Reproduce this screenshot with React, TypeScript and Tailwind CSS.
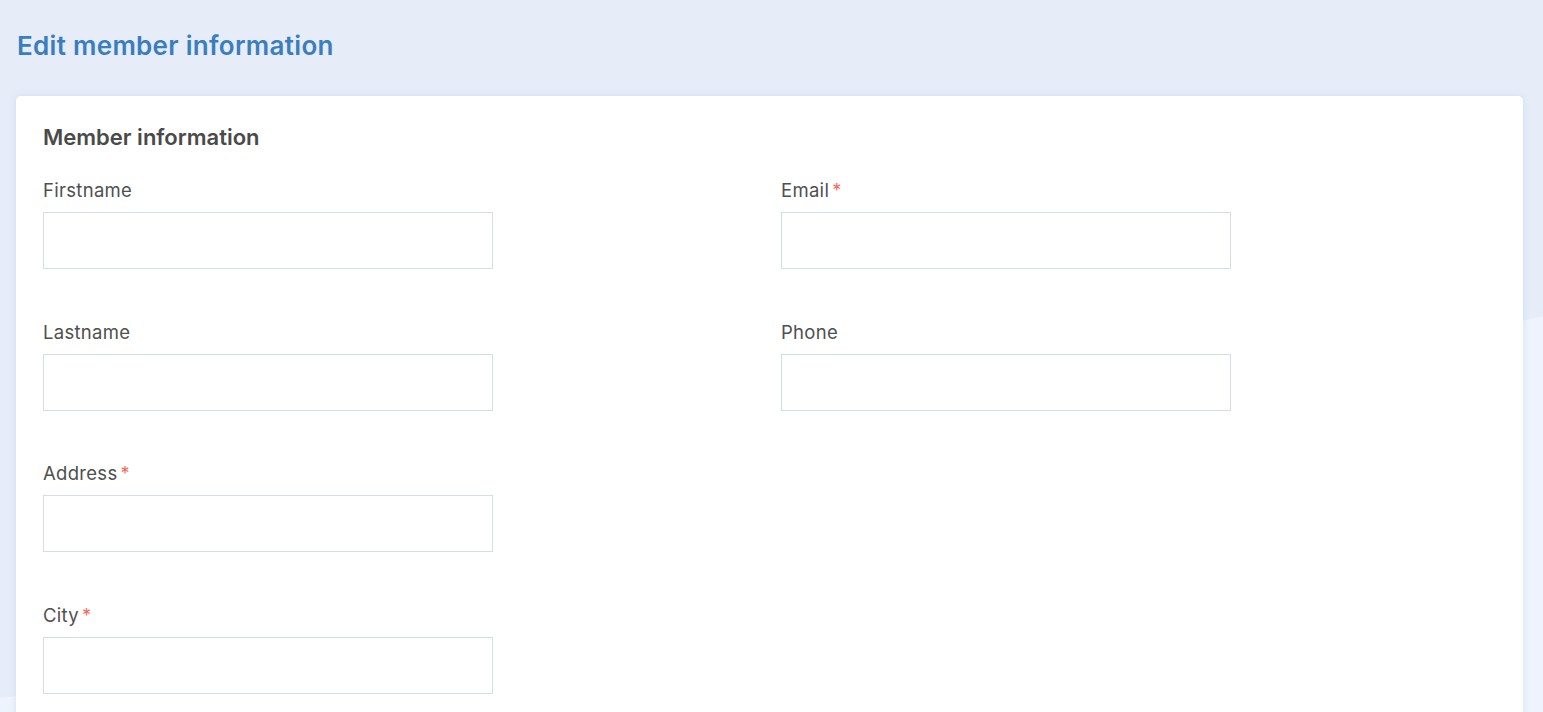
import React from 'react'

const fields = [
  [{ label: 'Firstname', required: false }, { label: 'Email', required: true }],
  [{ label: 'Lastname', required: false }, { label: 'Phone', required: false }],
  [{ label: 'Address', required: true }, null],
  [{ label: 'City', required: true }, null],
]

function Field({ label, required }: { label: string, required: boolean }) {
  return (
    <div className="flex flex-col">
      <label className="block h-6 text-[18.5px] leading-6 tracking-[0.3px] text-[#4f4f4f] mb-[10px]">
        {label}
        {required && <span className="text-[#f26b60] ml-[3px] text-[18px] leading-6">*</span>}
      </label>
      <input type="text" className="w-[450px] h-[57px] border border-[#d4dde9] bg-white outline-none px-3" />
    </div>
  )
}

export default function App() {
  return (
    <div className="relative min-h-[712px] h-[712px] overflow-hidden bg-[#e6edf9] font-['Inter','Noto_Sans',sans-serif]">
      <svg className="absolute inset-0 w-full h-full" viewBox="0 0 1543 712" preserveAspectRatio="none">
        <path d="M0 698 C 500 640, 1100 420, 1543 316 L1543 712 L0 712 Z" fill="#eef3fd" />
      </svg>
      <div className="relative pl-4 pr-5 pt-[30px]">
        <h1 className="text-[26px] leading-8 font-semibold tracking-[0.3px] text-[#3a7dc0] pl-[1px]">Edit member information</h1>
        <div className="mt-[34px] bg-white rounded-[5px] shadow-[0_0_6px_rgba(150,170,210,0.25)] px-[27px] pt-[27px] pb-10">
          <h2 className="text-[22px] leading-7 font-semibold text-[#4a4a4a]">Member information</h2>
          <div className="mt-[27px] flex flex-col gap-[50.7px]">
            {fields.map((row, i) => (
              <div key={i} className="grid grid-cols-[738px_1fr]">
                {row.map((f, j) => f ? <Field key={j} label={f.label} required={f.required} /> : <div key={j} />)}
              </div>
            ))}
          </div>
        </div>
      </div>
    </div>
  )
}
